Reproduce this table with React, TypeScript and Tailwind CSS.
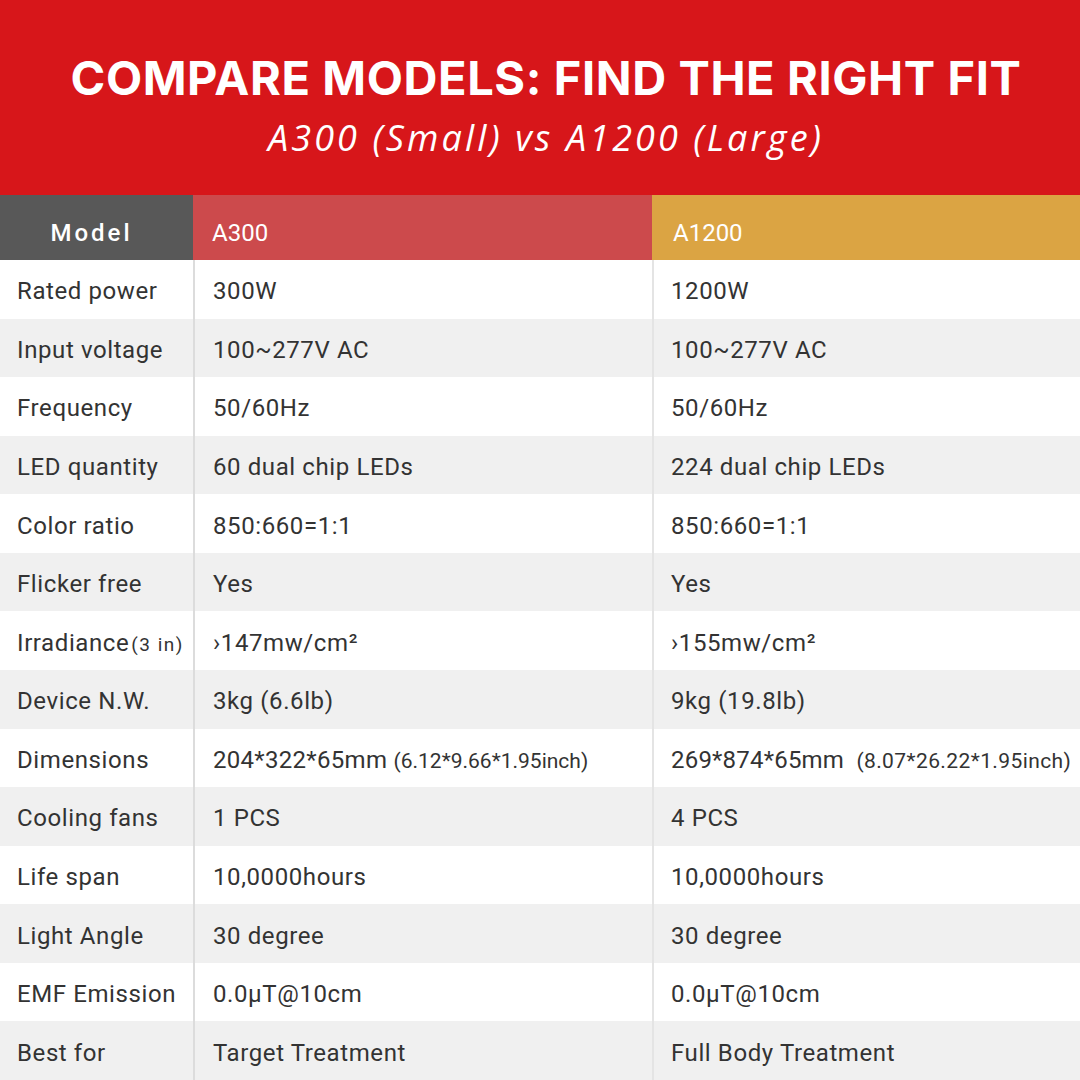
import React from "react";

type Row = { label: React.ReactNode; a: React.ReactNode; b: React.ReactNode };

const small = "text-[21px] tracking-normal";

const rows: Row[] = [
  { label: "Rated power", a: "300W", b: "1200W" },
  { label: "Input voltage", a: "100~277V AC", b: "100~277V AC" },
  { label: "Frequency", a: "50/60Hz", b: "50/60Hz" },
  { label: "LED quantity", a: "60 dual chip LEDs", b: "224 dual chip LEDs" },
  { label: "Color ratio", a: "850:660=1:1", b: "850:660=1:1" },
  { label: "Flicker free", a: "Yes", b: "Yes" },
  {
    label: (
      <span>
        Irradiance<span className="text-[19px] tracking-[1.5px] ml-[2px]">(3 in)</span>
      </span>
    ),
    a: "›147mw/cm²",
    b: "›155mw/cm²",
  },
  { label: "Device N.W.", a: "3kg (6.6lb)", b: "9kg (19.8lb)" },
  {
    label: "Dimensions",
    a: (
      <span className="tracking-[0.3px]">
        204*322*65mm <span className={small}>(6.12*9.66*1.95inch)</span>
      </span>
    ),
    b: (
      <span className="tracking-[0.2px]">
        269*874*65mm&nbsp; <span className="text-[21px] tracking-[0.4px]">(8.07*26.22*1.95inch)</span>
      </span>
    ),
  },
  { label: "Cooling fans", a: "1 PCS", b: "4 PCS" },
  { label: "Life span", a: "10,0000hours", b: "10,0000hours" },
  { label: "Light Angle", a: "30 degree", b: "30 degree" },
  { label: "EMF Emission", a: "0.0µT@10cm", b: "0.0µT@10cm" },
  { label: "Best for", a: "Target Treatment", b: "Full Body Treatment" },
];

export default function App() {
  return (
    <div className="w-[1080px] h-[1080px] overflow-hidden bg-white font-['Roboto',sans-serif]">
      <header className="h-[195px] bg-[#d7161a] flex flex-col items-center pt-[48px] text-white">
        <h1 className="font-['Inter',sans-serif] font-bold text-[47px] leading-[60px] tracking-[0.6px] ml-[12px]">
          COMPARE MODELS: FIND THE RIGHT FIT
        </h1>
        <p className="font-['Open_Sans',sans-serif] italic text-[36px] leading-[50px] tracking-[3.1px] mt-[5px] ml-[12px]">
          A300 (Small) vs A1200 (Large)
        </p>
      </header>

      <div className="grid grid-cols-[193px_459px_1fr] h-[65px] text-white text-[24px]">
        <div className="bg-[#585858] flex items-center justify-center pt-[10px] pr-[10px] font-medium tracking-[3px]">Model</div>
        <div className="bg-[#cc4a4c] flex items-center pl-[19px] pt-[10px]">A300</div>
        <div className="bg-[#dba443] flex items-center pl-[21px] pt-[10px]">A1200</div>
      </div>

      <div className="grid grid-rows-[repeat(14,1fr)] h-[820px] text-[#333] text-[24px] tracking-[0.6px]">
        {rows.map((row, i) => (
          <div
            key={i}
            className={
              "grid grid-cols-[193px_459px_1fr] " + (i % 2 === 1 ? "bg-[#f0f0f0]" : "bg-white")
            }
          >
            <div className="flex items-center pl-[17px] pt-[4px] whitespace-nowrap">{row.label}</div>
            <div className="flex items-center pl-[18px] pt-[4px] border-l-2 border-[#dcdcdc] whitespace-nowrap">{row.a}</div>
            <div className="flex items-center pl-[17px] pt-[4px] border-l-2 border-[#e4e4e4] whitespace-nowrap">{row.b}</div>
          </div>
        ))}
      </div>
    </div>
  );
}
